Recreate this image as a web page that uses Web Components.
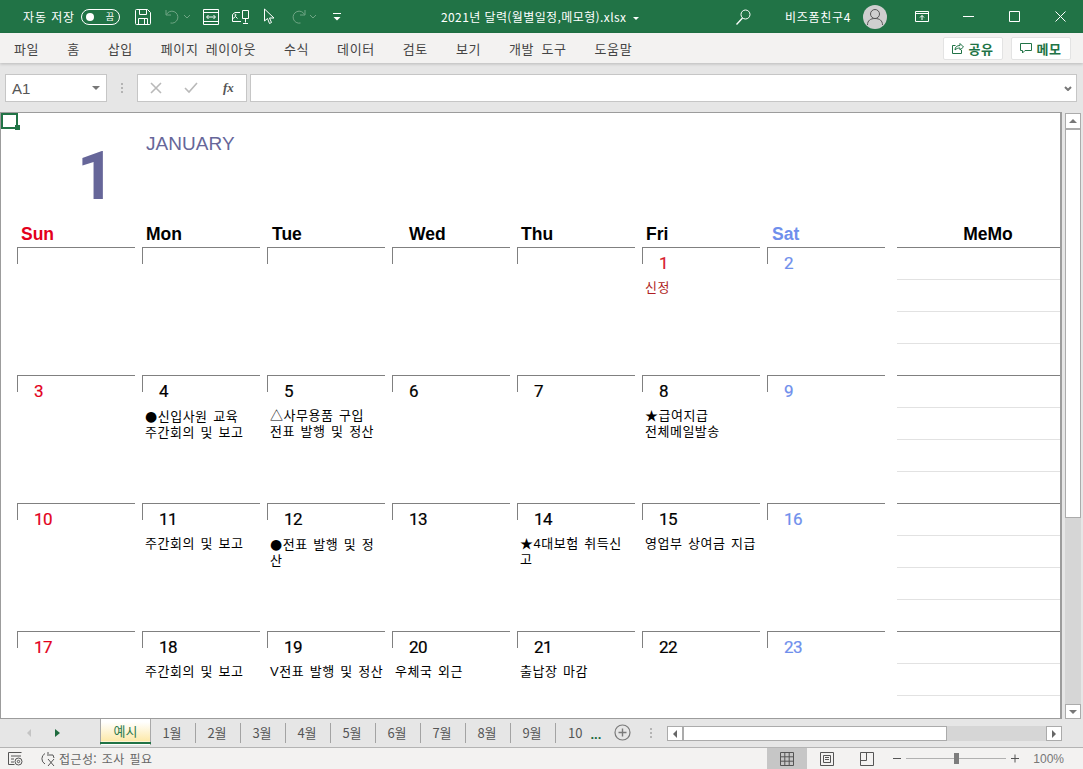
<!DOCTYPE html>
<html lang="ko">
<head>
<meta charset="utf-8">
<title>2021년 달력</title>
<style>
  html, body { margin: 0; height: 100%; overflow: hidden; }
  body {
    display: flex;
    flex-direction: column;
    height: 769px;
    font-family: "Noto Sans CJK KR", "Liberation Sans", sans-serif;
    background: #e6e6e6;
  }
</style>
</head>
<body>
<xl-titlebar></xl-titlebar>
<xl-menubar></xl-menubar>
<xl-formulabar></xl-formulabar>
<xl-sheet></xl-sheet>
<xl-tabs></xl-tabs>
<xl-statusbar></xl-statusbar>

<script>
(function() {

function shadow(el, html) {
  const template = document.createElement("template");
  template.innerHTML = html;
  el.attachShadow({mode: "open"}).appendChild(template.content.cloneNode(true));
}

class XLTitlebar extends HTMLElement {
  connectedCallback() {
    shadow(this, `<style>
      :host { display: flex; align-items: center; height: 33px; flex: none; background: #217346; color: #fff; font-size: 12px; }
      svg { display: block; flex: none; fill: none; stroke: #fff; stroke-width: 1; }
      .dim { stroke: #6fa584; }
      .auto { margin-left: 23px; width: 58px; letter-spacing: .9px; white-space: nowrap; }
      .toggle { width: 33px; height: 14px; border: 1px solid #fff; border-radius: 8px; display: flex; align-items: center; justify-content: space-between; padding: 0 0 0 4px; box-sizing: content-box; margin-right: 15px; }
      .toggle i { width: 8px; height: 8px; border-radius: 50%; background: #fff; }
      .toggle b { font-weight: 400; font-size: 9px; width: 18px; text-align: center; line-height: 14px; }
      .left { display: flex; align-items: center; width: 441px; flex: none; }
      .title { width: 295px; flex: none; white-space: nowrap; letter-spacing: .4px; }
      .title svg { display: inline-block; fill: #fff; stroke: none; margin-left: 7px; vertical-align: 2px; }
      .name { margin-left: 34px; width: 78px; flex: none; white-space: nowrap; letter-spacing: .7px; }
      .avatar { width: 24px; height: 24px; border-radius: 50%; background: #cfcfcf; flex: none; }
      .avatar svg { stroke: #555; }
    </style>
    <div class="left">
      <span class="auto">자동 저장</span>
      <div class="toggle"><i></i><b>끔</b></div>
      <svg width="16" height="16" viewBox="0 0 16 16" style="margin-right:14px"><path d="M1.500.500h11l3 3v11a1 1 0 0 1-1 1h-13a1 1 0 0 1-1-1v-13a1 1 0 0 1 1-1zM4.500.500v5h7v-5M3.500 15.500v-6h9v6M9.500 10v5"/></svg>
      <svg class="dim" width="15" height="15" viewBox="0 0 15 15" style="margin-right:3px"><path d="M1 1v5h5M1.500 5.500a6 6 0 1 1 4 8.500"/></svg>
      <svg class="dim" width="8" height="5" viewBox="0 0 8 5" style="margin-right:12px"><path d="M1 1l3 3 3-3"/></svg>
      <svg width="16" height="16" viewBox="0 0 16 16" style="margin-right:13px"><path d="M.5.500h15v15H.5zM.5 3.500h15M.5 12.500h15M4 8h8M5.500 6L3.500 8l2 2M10.500 6l2 2-2 2"/></svg>
      <svg width="17" height="16" viewBox="0 0 17 16" style="margin-right:14px"><path d="M8 3.500H3l-2.500 2v7H9M1 9.500l2.500-2 2 2M10.500 1.500h6v8h-6zM13.500 9.500v4M11 14.500h5"/><circle cx="3.500" cy="6" r=".6"/></svg>
      <svg width="13" height="17" viewBox="0 0 13 17" style="margin-right:15px"><path d="M1.500 1v12l3-2.500 2 5 2-1-2-4.500h4.500z"/></svg>
      <svg class="dim" width="15" height="15" viewBox="0 0 15 15" style="margin-right:3px"><path d="M14 1v5H9M13.500 5.500a6 6 0 1 0-4 8.500"/></svg>
      <svg class="dim" width="8" height="5" viewBox="0 0 8 5" style="margin-right:15px"><path d="M1 1l3 3 3-3"/></svg>
      <svg width="10" height="8" viewBox="0 0 10 8"><path d="M1 .5h8"/><path d="M1.500 4h7L5 7.500z" fill="#fff" stroke="none"/></svg>
    </div>
    <div class="title">2021년 달력(월별일정,메모형).xlsx<svg width="6" height="3" viewBox="0 0 6 3"><path d="M0 0h6L3 3z"/></svg></div>
    <svg width="15" height="16" viewBox="0 0 15 16"><circle cx="9.500" cy="5.500" r="4.500"/><path d="M6.500 9L.5 15.500" stroke-width="1.300"/></svg>
    <span class="name">비즈폼친구4</span>
    <div class="avatar"><svg width="24" height="24" viewBox="0 0 24 24"><circle cx="12" cy="9" r="4.500"/><path d="M4.500 20c0-4.500 3-6.500 7.500-6.500s7.500 2 7.500 6.500"/></svg></div>
    <svg width="14" height="11" viewBox="0 0 14 11" style="margin-left:28px"><path d="M.5.500h13v10H.5zM.5 2.500h13M7 9V4.500M5 6.500l2-2 2 2"/></svg>
    <svg width="11" height="1" viewBox="0 0 11 1" style="margin-left:34px"><path d="M0 .5h11"/></svg>
    <svg width="11" height="11" viewBox="0 0 11 11" style="margin-left:35px"><path d="M.5.500h10v10H.5z"/></svg>
    <svg width="11" height="11" viewBox="0 0 11 11" style="margin-left:35px"><path d="M.5.500l10 10M10.500.500l-10 10"/></svg>`);
  }
}

class XLMenubar extends HTMLElement {
  connectedCallback() {
    const items = ["파일", "홈", "삽입", "페이지 레이아웃", "수식", "데이터", "검토", "보기", "개발 도구", "도움말"];
    shadow(this, `<style>
      :host { display: flex; align-items: center; height: 30px; flex: none; padding: 0 12px 0 14px; background: #f3f2f1; color: #444; font-size: 13px; box-shadow: 0 1px 3px rgba(0,0,0,.2); position: relative; z-index: 1; }
      nav { display: flex; gap: 28px; white-space: nowrap; letter-spacing: .6px; word-spacing: 3px; }
      .actions { margin-left: auto; display: flex; gap: 8px; }
      button { all: unset; box-sizing: border-box; width: 60px; height: 23px; background: #fff; border: 1px solid #e3e3e3; border-radius: 2px; display: flex; align-items: center; justify-content: center; gap: 4px; color: #217346; font-weight: 700; font-size: 13px; letter-spacing: .6px; }
      svg { fill: none; stroke: #217346; display: block; }
    </style>
    <nav>${items.map(i => `<span>${i}</span>`).join("")}</nav>
    <div class="actions">
      <button><svg width="12" height="12" viewBox="0 0 12 12"><path d="M3.500 3.500H.5v8h9V8M3 8c0-3 2-4.500 5-4.500V1.500L11.500 5 8 8V6C6 6 4.500 6.500 3 8z"/></svg>공유</button>
      <button><svg width="12" height="11" viewBox="0 0 12 11"><path d="M.5.500h11v7H5L2.500 10V7.500h-2z"/></svg>메모</button>
    </div>`);
  }
}

class XLFormulabar extends HTMLElement {
  connectedCallback() {
    shadow(this, `<style>
      :host { display: flex; align-items: flex-start; height: 49px; flex: none; box-sizing: border-box; padding: 11px 6px 0 5px; background: #e6e6e6; }
      .box { box-sizing: border-box; height: 28px; background: #fff; border: 1px solid #c6c6c6; display: flex; align-items: center; flex: none; position: relative; }
      .name { width: 102px; padding-left: 6px; font: 15px "Liberation Sans", sans-serif; color: #555; justify-content: space-between; padding-right: 6px; }
      .tri { width: 0; height: 0; border: 4px solid transparent; border-top: 4px solid #777; border-bottom: 0; }
      .dots { width: 30px; flex: none; height: 28px; display: flex; flex-direction: column; align-items: center; justify-content: center; gap: 2px; }
      .dots i { width: 2px; height: 2px; background: #b4b4b4; }
      .fx { width: 110px; margin-right: 3px; gap: 22px; padding-left: 12px; }
      .fx svg { stroke: #b9b9b9; fill: none; stroke-width: 1.600; display: block; }
      .fx em { font: italic 700 13px "Liberation Serif", serif; color: #555; margin-left: 3px; }
      .input { flex: 1; justify-content: flex-end; padding-right: 4px; }
      .input svg { fill: none; stroke: #777; stroke-width: 2; }
    </style>
    <div class="box name"><span>A1</span><i class="tri"></i></div>
    <div class="dots"><i></i><i></i><i></i></div>
    <div class="box fx">
      <svg width="12" height="12" viewBox="0 0 12 12"><path d="M1 1l10 10M11 1L1 11"/></svg>
      <svg width="14" height="12" viewBox="0 0 14 12"><path d="M1 6l4 4 8-9"/></svg>
      <em>fx</em>
    </div>
    <div class="box input"><svg width="8" height="5" viewBox="0 0 8 5"><path d="M1 1l3 3 3-3"/></svg></div>`);
  }
}

class XLDay extends HTMLElement {
  connectedCallback() {
    shadow(this, `<style>
      :host { display: block; height: 128px; box-sizing: border-box; position: relative; border-top: 1px solid #808080; font: 17px Roboto, "Liberation Sans", sans-serif; color: #000; overflow: hidden; }
      :host::before { content: ""; position: absolute; left: 0; top: 0; width: 1px; height: 16px; background: #808080; }
      .num { height: 32px; line-height: 31px; padding-left: 17px; letter-spacing: -.6px; -webkit-text-stroke: .2px currentColor; }
      :host([tone="sun"]) .num { color: #e3001b; }
      :host([tone="sat"]) .num { color: #6f8fec; }
      :host([tone="red"]) .num { color: #d8192a; }
      :host([tone="red"]) .notes { color: #b01e23; }
      .notes { padding-left: 3px; font: 13px/16px "Liberation Sans", "Noto Sans CJK KR", sans-serif; letter-spacing: .5px; word-spacing: 1.500px; white-space: nowrap; }
    </style>
    <div class="num">${this.getAttribute("day") || ""}</div>
    <div class="notes"><slot></slot></div>`);
  }
}

class XLMemo extends HTMLElement {
  connectedCallback() {
    shadow(this, `<style>
      :host { display: block; height: 128px; box-sizing: border-box; margin-left: 5px; border-top: 1px solid #808080; }
      div { height: 31px; border-bottom: 1px solid #e2e2e2; }
      div:last-child { border-bottom: 0; }
    </style><div></div><div></div><div></div><div></div>`);
  }
}

class XLHead extends HTMLElement {
  connectedCallback() {
    shadow(this, `<style>
      :host { display: block; height: 25px; font: 700 17.500px/25px "Liberation Sans", sans-serif; color: #000; white-space: nowrap; box-sizing: border-box; }
      :host([tone="sun"]) { color: #e3001b; }
      :host([tone="sat"]) { color: #6f8fec; }
    </style><slot></slot>`);
    this.style.paddingLeft = (this.getAttribute("inset") || 4) + "px";
  }
}

class XLSheet extends HTMLElement {
  connectedCallback() {
    const heads = [["Sun", 4, "sun"], ["Mon", 4], ["Tue", 5], ["Wed", 17], ["Thu", 4], ["Fri", 4], ["Sat", 5, "sat"]];
    const weeks = [
      [[""], [""], [""], [""], [""], ["1", "red", ["신정"]], ["2", "sat"]],
      [["3", "sun"], ["4", "", ["●신입사원 교육", "주간회의 및 보고"]], ["5", "", ["△사무용품 구입", "전표 발행 및 정산"]], ["6"], ["7"], ["8", "", ["★급여지급", "전체메일발송"]], ["9", "sat"]],
      [["10", "sun"], ["11", "", ["주간회의 및 보고"]], ["12", "", ["●전표 발행 및 정", "산"]], ["13"], ["14", "", ["★4대보험 취득신", "고"]], ["15", "", ["영업부 상여금 지급"]], ["16", "sat"]],
      [["17", "sun"], ["18", "", ["주간회의 및 보고"]], ["19", "", ["V전표 발행 및 정산"]], ["20", "", ["우체국 외근"]], ["21", "", ["출납장 마감"]], ["22"], ["23", "sat"]]
    ];
    // the round bullet of Liberation Sans is too small, DejaVu has the right one
    const note = t => t.replace("●", `<span style="font:14px 'DejaVu Sans',sans-serif">●</span>`);
    const days = weeks.map(week => week.map(d =>
      `<xl-day day="${d[0]}" tone="${d[1] || ""}">${(d[2] || []).map(t => `<span style="display:block">${note(t)}</span>`).join("")}</xl-day>`
    ).join("") + "<xl-memo></xl-memo>").join("");

    shadow(this, `<style>
      :host { display: flex; flex: none; height: 607px; background: #e6e6e6; }
      .pane { flex: none; width: 1062px; height: 607px; box-sizing: border-box; background: #fff; border: 1px solid #9c9c9c; border-right-width: 2px; position: relative; overflow: hidden; }
      .grid { display: grid; grid-template-columns: repeat(7, 118px) 169px; column-gap: 7px; padding-left: 16px; width: 1100px; }
      .month { grid-column: 1 / -1; display: grid; grid-template-columns: subgrid; height: 109px; }
      .big { font: 700 66px/1 Roboto, "Liberation Sans", sans-serif; color: #666699; padding: 31px 0 0 60px; }
      .jan { font: 19px "Liberation Sans", sans-serif; color: #666699; padding: 20px 0 0 4px; grid-column: 2 / 5; letter-spacing: .05px; }
      .cursor { position: absolute; left: 0; top: 0; width: 13px; height: 12px; border: 2px solid #217346; }
      .cursor::after { content: ""; position: absolute; right: -4px; bottom: -3px; width: 5px; height: 5px; background: #217346; }
      .bar { flex: 1; padding: 1px 2px 0 3px; display: flex; flex-direction: column; }
      .bar div { box-sizing: border-box; background: #fff; border: 1px solid #ababab; flex: none; display: flex; align-items: center; justify-content: center; }
      .up { height: 16px; }
      .thumb { height: 389px; }
      .track { background: #d6d6d6 !important; border: 0 !important; flex: 1 !important; }
      .down { height: 15px; margin-bottom: 0; }
      i.u, i.d { width: 0; height: 0; border: 4px solid transparent; }
      i.u { border-bottom: 4px solid #777; border-top: 0; }
      i.d { border-top: 4px solid #777; border-bottom: 0; }
    </style>
    <div class="pane">
      <div class="grid">
        <div class="month"><div class="big">1</div><div class="jan">JANUARY</div></div>
        ${heads.map(h => `<xl-head inset="${h[1]}" tone="${h[2] || ""}">${h[0]}</xl-head>`).join("")}
        <xl-head inset="0"><span style="display:block;width:164px;text-align:center;margin-left:14px">MeMo</span></xl-head>
        ${days}
      </div>
      <div class="cursor"></div>
    </div>
    <div class="bar">
      <div class="up"><i class="u"></i></div>
      <div class="thumb"></div>
      <div class="track"></div>
      <div class="down"><i class="d"></i></div>
    </div>`);
  }
}

class XLTabs extends HTMLElement {
  connectedCallback() {
    const months = ["1월", "2월", "3월", "4월", "5월", "6월", "7월", "8월", "9월"];
    shadow(this, `<style>
      :host { display: flex; align-items: stretch; height: 28px; flex: none; box-sizing: border-box; background: #e6e6e6; font-size: 13px; color: #555; }
      .nav { width: 100px; flex: none; display: flex; align-items: center; padding-left: 27px; box-sizing: border-box; gap: 24px; }
      .nav i { width: 0; height: 0; border: 4px solid transparent; border-left-width: 0; border-right: 4px solid #c4c4c4; }
      .nav i + i { border-right-width: 0; border-left: 5px solid #1e6b3e; }
      .active { width: 51px; box-sizing: border-box; flex: none; border: 1px solid #a9a9a9; border-top: 0; border-bottom: 0; position: relative; text-align: center; line-height: 24px; color: #2d7a4d; background: linear-gradient(#fff 0, #fff 3px, #fde9a9 22px, #fff 23px); height: 26px; }
      .active::after { content: ""; position: absolute; left: -1px; right: -1px; top: 23px; height: 2px; background: #217346; }
      .tab { width: 45px; flex: none; display: flex; align-items: center; justify-content: center; box-sizing: border-box; height: 20px; margin-top: 4px; border-right: 1px solid #a3a3a3; line-height: 20px; white-space: nowrap; padding-right: 2px; }
      .more { width: 45px; flex: none; display: flex; align-items: center; padding-left: 12px; box-sizing: border-box; gap: 8px; line-height: 20px; height: 20px; margin-top: 4px; }
      .more b { color: #1e6b3e; font: 700 13px "Liberation Sans", sans-serif; letter-spacing: 0; margin-top: 3px; }
      .plus { flex: none; margin: 5px 0 0 13px; display: block; fill: none; stroke: #7a7a7a; }
      .dots { width: 2px; flex: none; display: flex; flex-direction: column; gap: 2px; margin: 9px 15px 0 19px; }
      .dots i { width: 2px; height: 2px; background: #b4b4b4; }
      .h { flex: none; width: 395px; height: 15px; margin-top: 7px; display: flex; }
      .h div { box-sizing: border-box; background: #fff; border: 1px solid #ababab; display: flex; align-items: center; justify-content: center; }
      .b { width: 16px; flex: none; }
      .t { width: 264px; flex: none; }
      .r { flex: 1; background: #d6d6d6 !important; border: 0 !important; }
      .b i { width: 0; height: 0; border: 4px solid transparent; border-left-width: 0; border-right: 4px solid #666; }
      .b.n i { border-right-width: 0; border-right: 0; border-left: 4px solid #666; }
    </style>
    <div class="nav"><i></i><i></i></div>
    <div class="active">예시</div>
    ${months.map(m => `<div class="tab">${m}</div>`).join("")}
    <div class="more"><span>10</span><b>...</b></div>
    <svg class="plus" width="17" height="17" viewBox="0 0 17 17"><circle cx="8.500" cy="8.500" r="7.500" stroke-width="1.200"/><path d="M8.500 4.500v8M4.500 8.500h8" stroke-width="1.400"/></svg>
    <div class="dots"><i></i><i></i><i></i></div>
    <div class="h"><div class="b"><i></i></div><div class="t"></div><div class="r"></div><div class="b n"><i></i></div></div>`);
  }
}

class XLStatusbar extends HTMLElement {
  connectedCallback() {
    shadow(this, `<style>
      :host { display: flex; align-items: center; height: 22px; flex: none; box-sizing: border-box; background: #f3f2f1; border-top: 1px solid #b4b4b4; color: #666; font-size: 12px; }
      svg { display: block; flex: none; fill: none; stroke: #555; }
      .acc { margin-left: 3px; white-space: nowrap; letter-spacing: .4px; word-spacing: 1px; }
      .view { flex: none; width: 40px; height: 21px; display: flex; align-items: center; justify-content: center; }
      .view.on { background: #c6c6c6; }
      .views { margin-left: auto; display: flex; }
      .slider { width: 100px; height: 1px; background: #b1b1b1; position: relative; margin: 0 5px; flex: none; }
      .slider i { position: absolute; left: 48px; top: -5px; width: 5px; height: 11px; background: #7d7d7d; }
      .pct { margin: 0 19px 0 14px; font: 12px "Liberation Sans", sans-serif; color: #777; }
    </style>
    <svg width="15" height="15" viewBox="0 0 15 15" style="margin-left:8px"><path d="M.5 1.500h13M.5 1.500v12h6M3 5h10M3 8h3M3 11h3"/><circle cx="10.500" cy="10.500" r="3.500"/><circle cx="10.500" cy="10.500" r="1.200"/></svg>
    <svg width="16" height="16" viewBox="0 0 16 16" style="margin-left:17px"><path d="M5 2.500A6 6 0 0 0 5 13M8 1v4M8 8l6 7M14 8l-6 7M9 4h4l1 3"/></svg>
    <span class="acc">접근성: 조사 필요</span>
    <div class="views">
      <div class="view on"><svg width="14" height="14" viewBox="0 0 14 14"><path d="M.5.500h13v13H.5zM.5 4.800h13M.5 9.200h13M4.800.500v13M9.200.500v13"/></svg></div>
      <div class="view"><svg width="14" height="14" viewBox="0 0 14 14"><path d="M.5.500h13v13H.5zM3.500 3.500h7v7h-7zM5 5.500h4M5 7.500h4"/></svg></div>
      <div class="view"><svg width="14" height="14" viewBox="0 0 14 14"><path d="M.5.500h13v13H.5zM.5 8.500h6v-8"/></svg></div>
    </div>
    <svg width="8" height="1" viewBox="0 0 8 1" style="margin-left:6px"><path d="M0 .5h8"/></svg>
    <div class="slider"><i></i></div>
    <svg width="8" height="9" viewBox="0 0 8 9"><path d="M0 4.500h8M4 .5v8"/></svg>
    <span class="pct">100%</span>`);
  }
}

customElements.define("xl-titlebar", XLTitlebar);
customElements.define("xl-menubar", XLMenubar);
customElements.define("xl-formulabar", XLFormulabar);
customElements.define("xl-day", XLDay);
customElements.define("xl-memo", XLMemo);
customElements.define("xl-head", XLHead);
customElements.define("xl-sheet", XLSheet);
customElements.define("xl-tabs", XLTabs);
customElements.define("xl-statusbar", XLStatusbar);

})();
</script>
</body>
</html>
